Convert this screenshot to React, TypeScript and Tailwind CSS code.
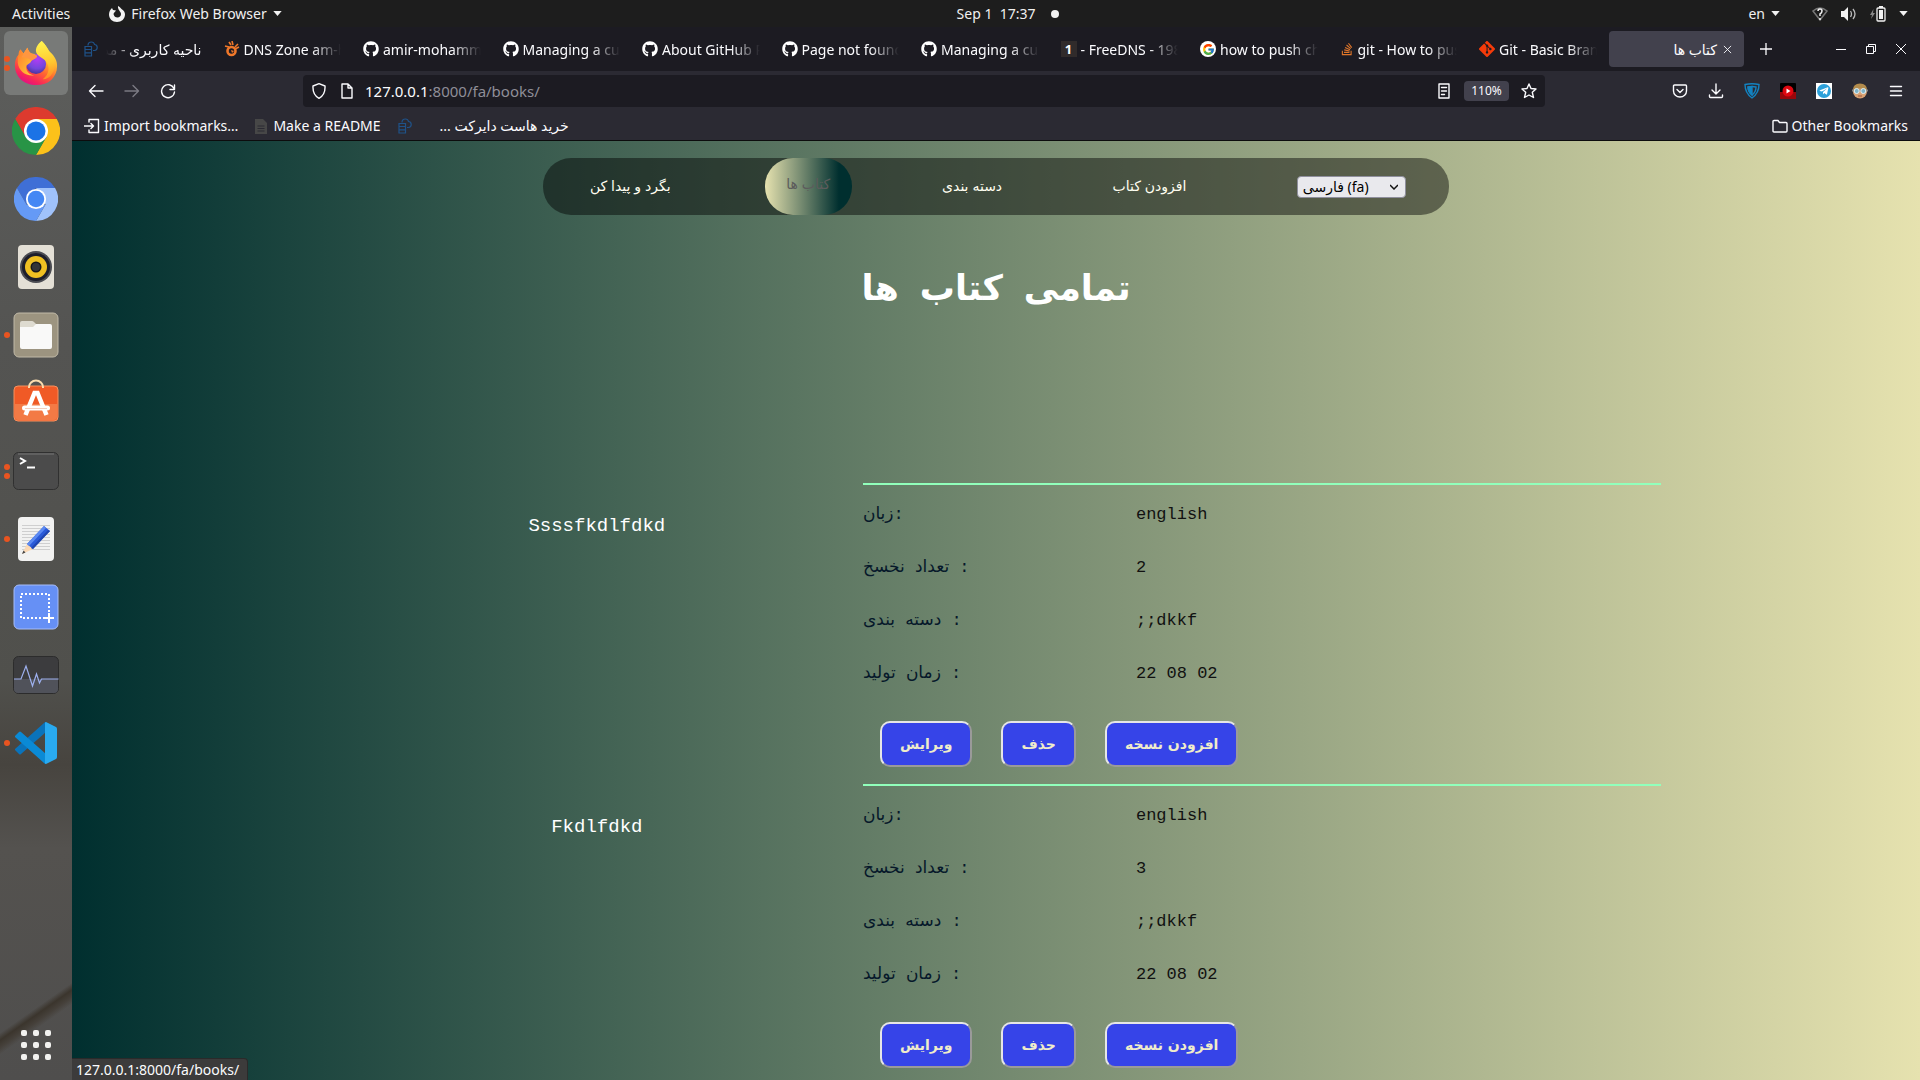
import type { ReactNode } from "react";
import { FaGithub, FaStackOverflow, FaTelegramPlane } from "react-icons/fa";
import { FcGoogle } from "react-icons/fc";
import { SiGit } from "react-icons/si";

const uiFont = "font-['Noto_Sans','DejaVu_Sans',sans-serif]";
const monoFont = "font-['Liberation_Mono','DejaVu_Sans',monospace]";

/* ---------- dock icons ---------- */

function FirefoxIcon() {
  return (
    <svg viewBox="0 0 48 48" className="size-[46px]">
      <defs>
        <linearGradient id="ffBody" x1="0.8" y1="0.05" x2="0.3" y2="1">
          <stop offset="0" stopColor="#fff14a" />
          <stop offset="0.35" stopColor="#ffb52e" />
          <stop offset="0.6" stopColor="#ff6a2f" />
          <stop offset="0.85" stopColor="#f8255a" />
          <stop offset="1" stopColor="#e00f86" />
        </linearGradient>
        <radialGradient id="ffGlobe" cx="0.55" cy="0.25" r="0.8">
          <stop offset="0" stopColor="#b23cf5" />
          <stop offset="0.6" stopColor="#7446dc" />
          <stop offset="1" stopColor="#45318f" />
        </radialGradient>
        <linearGradient id="ffTail" x1="0.4" y1="0" x2="0.5" y2="1">
          <stop offset="0" stopColor="#fff44f" />
          <stop offset="0.6" stopColor="#ffc62e" />
          <stop offset="1" stopColor="#ff8a26" />
        </linearGradient>
        <linearGradient id="ffHead" x1="0" y1="0" x2="1" y2="0.8">
          <stop offset="0" stopColor="#ff7a2e" />
          <stop offset="1" stopColor="#ffcf36" />
        </linearGradient>
      </defs>
      <path
        d="M30 1c5 5 6 8 8 11 6 5 8 10 8 15 0 12-9 20-21.500 20C11 47 2 38 2 26c0-4 1-8 4-11 0-2 .5-4 2-5 1 2 2 3 3 4l4-6c1 3 2 5 4 6l8 1c-2-5-1-10 3-14z"
        fill="url(#ffBody)"
      />
      <circle cx="24" cy="25" r="10.500" fill="url(#ffGlobe)" />
      <path
        d="M30 1c5 5 6 8 8 11 7 7 7 17 3 23-2 4-6 6-10 6 7-5 8-13 3-19-3-4-9-5-10-10-.5-4 2-8 6-11z"
        fill="url(#ffTail)"
      />
      <path
        d="M6 15c0-2 .5-4 2-5 1 2 2 3 3 4l4-6c1 3 2 5 4 6 2 1 6 1 6 3-1 3-5 3-6 5-1 3-4 3-5 5-1 5 3 9 8 10-9 1-16-5-17-13 0-4 0-6 1-9z"
        fill="url(#ffHead)"
      />
      <path d="M11 14l4-6c1 3 2 5 4 6 2 1 6 1 6 3-1 3-5 3-6 5-3-4-8-4-10-4z" fill="#ff9640" />
    </svg>
  );
}

function ChromeIcon() {
  return (
    <svg viewBox="0 0 48 48" className="size-12">
      <path d="M3.200 12A24 24 0 0 1 44.800 12H24L13.600 30z" fill="#dd3a2e" />
      <path d="M44.800 12A24 24 0 0 1 24 48L34.400 30 24 12z" fill="#fcc11a" />
      <path d="M24 48A24 24 0 0 1 3.200 12L13.600 30H34.400z" fill="#289446" />
      <circle cx="24" cy="24" r="12" fill="#fff" />
      <circle cx="24" cy="24" r="9.500" fill="#1b73e6" />
    </svg>
  );
}

function ChromiumIcon() {
  return (
    <svg viewBox="0 0 48 48" className="size-11">
      <path d="M3.200 12A24 24 0 0 1 44.800 12H24L13.600 30z" fill="#3f6fd6" />
      <path d="M44.800 12A24 24 0 0 1 24 48L34.400 30 24 12z" fill="#a0c2fa" />
      <path d="M24 48A24 24 0 0 1 3.200 12L13.600 30H34.400z" fill="#659af6" />
      <circle cx="24" cy="24" r="11" fill="#fff" />
      <circle cx="24" cy="24" r="9" fill="#4487f4" />
    </svg>
  );
}

function RhythmboxIcon() {
  return (
    <svg viewBox="0 0 48 48" className="size-12">
      <rect x="6" y="2" width="36" height="44" rx="4" fill="#e4e0d6" />
      <circle cx="24" cy="24" r="16" fill="#4b4c52" />
      <circle cx="24" cy="24" r="14" fill="#1d1e2b" />
      <circle cx="24" cy="24" r="11" fill="#efbf22" />
      <circle cx="24" cy="24" r="5.500" fill="#17171a" />
      <circle cx="24" cy="24" r="4" fill="#333438" />
    </svg>
  );
}

function FilesIcon() {
  return (
    <svg viewBox="0 0 48 48" className="size-12">
      <rect x="2" y="2" width="44" height="44" rx="5" fill="#9c9480" stroke="#c0b9a7" />
      <path d="M8 12q0-2 2-2h10q1 0 2 1l2 2h14v8H8z" fill="#dedbd0" />
      <path d="M8 16h13l3-3h14q2 0 2 2v21q0 2-2 2H10q-2 0-2-2z" fill="#f9f9f8" />
    </svg>
  );
}

function SoftwareIcon() {
  return (
    <svg viewBox="0 3 48 48" className="size-12">
      <rect x="2" y="10" width="44" height="35" rx="4" fill="#f05a26" stroke="#f7915f" />
      <path d="M3 28h42v13q0 3-3 3H6q-3 0-3-3z" fill="#f37a45" />
      <path d="M17 12v-1a7 6.500 0 0 1 14 0v1" fill="none" stroke="#fbdcae" strokeWidth="2" />
      <path d="M13.500 39L22.500 17h3L34.500 39" fill="none" stroke="#fff" strokeWidth="4.500" />
      <rect x="10" y="29.500" width="28" height="5" rx="2.500" fill="#fff" />
      <path d="M13 32.500h22" stroke="#f3cfc0" />
    </svg>
  );
}

function TerminalIcon() {
  return (
    <svg viewBox="0 0 48 48" className="size-12">
      <rect x="1.500" y="5.500" width="45" height="37" rx="5" fill="#4b4b4b" stroke="#303030" />
      <path d="M6 7h36" stroke="#777" />
      <path d="M8 11l5 3-5 3" fill="none" stroke="#fff" strokeWidth="2" />
      <path d="M15 20.500h8" stroke="#fff" strokeWidth="2" />
    </svg>
  );
}

function EditorIcon() {
  return (
    <svg viewBox="0 0 48 48" className="size-12">
      <rect x="6" y="2" width="36" height="44" rx="4" fill="#f2f2f1" />
      <path
        d="M10 10.500h28M10 13.500h28M10 16.500h28M10 19.500h28M10 22.500h28M10 25.500h28M10 28.500h28M10 31.500h28M10 34.500h28"
        stroke="#cfcfcf"
      />
      <path d="M10 39l5-10 6 5z" fill="#fbd9b5" />
      <path d="M10 39l1.500-3.500 2 2z" fill="#444" />
      <path d="M15 29l17-18 6 5-17 18z" fill="#2a5ad9" />
      <path d="M15 29l17-18 2 2-17 18z" fill="#5c8af2" />
      <path d="M19 33l17-18 2 1-17 18z" fill="#2046b0" />
    </svg>
  );
}

function ScreenshotIcon() {
  return (
    <svg viewBox="0 0 48 48" className="size-12">
      <rect x="2" y="2" width="44" height="44" rx="5" fill="#6690f5" stroke="#a7bdf8" />
      <rect x="9" y="11" width="28" height="24" fill="none" stroke="#fff" strokeWidth="2" strokeDasharray="2 2" />
      <path d="M37 30v10M32 35h10" stroke="#fff" strokeWidth="2" />
    </svg>
  );
}

function MonitorIcon() {
  return (
    <svg viewBox="0 0 48 48" className="size-12">
      <rect x="1.500" y="5.500" width="45" height="37" rx="5" fill="#3c3c3e" stroke="#2c2c2c" />
      <path d="M2 28h44v10q0 4-4 4H6q-4 0-4-4z" fill="#50525a" />
      <path d="M2 28h7l5-13 6.500 20 4-12 3 9 2-4h17" fill="none" stroke="#9db0ee" strokeWidth="1.200" />
    </svg>
  );
}

function CodeIcon() {
  return (
    <svg viewBox="0 0 48 48" className="size-12">
      <path d="M3 31l4 4q1 1 2 0L34 13V3q-1 0-2 1L3 30z" fill="#0a73bb" />
      <path d="M3 17l4-4q1-1 2 0L34 35v10q-1 0-2-1L3 18z" fill="#0a8ad6" />
      <path d="M34 3l10 5q1 .5 1 2v28q0 1.500-1 2l-10 5q-1 0-1-1V4q0-1 1-1z" fill="#29aaf0" />
    </svg>
  );
}

const dock: { name: string; icon: ReactNode; dots: number; active?: boolean }[] = [
  { name: "Firefox", icon: <FirefoxIcon />, dots: 2, active: true },
  { name: "Chrome", icon: <ChromeIcon />, dots: 0 },
  { name: "Chromium", icon: <ChromiumIcon />, dots: 0 },
  { name: "Rhythmbox", icon: <RhythmboxIcon />, dots: 0 },
  { name: "Files", icon: <FilesIcon />, dots: 1 },
  { name: "Software", icon: <SoftwareIcon />, dots: 0 },
  { name: "Terminal", icon: <TerminalIcon />, dots: 2 },
  { name: "Text Editor", icon: <EditorIcon />, dots: 1 },
  { name: "Screenshot", icon: <ScreenshotIcon />, dots: 0 },
  { name: "System Monitor", icon: <MonitorIcon />, dots: 0 },
  { name: "Visual Studio Code", icon: <CodeIcon />, dots: 1 },
];

function Dock() {
  return (
    <aside className="flex w-[72px] shrink-0 flex-col bg-[linear-gradient(145deg,transparent_0_46%,#3b352d_50%,#45403a_54%,transparent_58%),linear-gradient(180deg,#5d5e5c,#545452_30%,#50504c_62%,#47443f_70%,#54524f_78%,#4f4e4d)] bg-[length:100%_130px,100%_100%] bg-[position:bottom,top] bg-no-repeat pt-1 pb-3">
      <div className="flex flex-col gap-1">
        {dock.map((d) => (
          <div key={d.name} className="flex h-16 items-center">
            <span className="relative z-10 flex w-1 shrink-0 flex-col items-end gap-[3px]">
              {Array.from({ length: d.dots }, (_, i) => (
                <span key={i} className="-mr-1.5 size-1.5 rounded-full bg-[#e95420]" />
              ))}
            </span>
            <button
              aria-label={d.name}
              className={
                d.active
                  ? "flex size-16 items-center justify-center rounded-md bg-[#787a78]"
                  : "flex size-16 items-center justify-center rounded-md"
              }
            >
              {d.icon}
            </button>
          </div>
        ))}
      </div>
      <button aria-label="Show Applications" className="mt-auto grid grid-cols-3 gap-1.5 self-center p-2">
        {Array.from({ length: 9 }, (_, i) => (
          <span key={i} className="size-1.5 rounded-[2px] bg-[#f2f2f0]" />
        ))}
      </button>
    </aside>
  );
}

/* ---------- desktop top bar ---------- */

function Caret() {
  return (
    <svg viewBox="0 0 10 6" className="h-[5px] w-[9px] shrink-0">
      <path d="M0 0h10L5 6z" fill="#f2f2f2" />
    </svg>
  );
}

function TopBar() {
  return (
    <header className="grid h-[27px] shrink-0 grid-cols-[1fr_auto_1fr] items-center bg-[#1d1d1d] px-3 text-[14px] text-[#f0f0f0]">
      <div className="flex items-center">
        <button>Activities</button>
        <button className="ml-[39px] flex items-center gap-1.5">
          <svg viewBox="0 0 16 16" className="size-4">
            <path
              fillRule="evenodd"
              d="M9 0c2 1 2.500 2 3.500 3C15 4.500 16 6.500 16 8.500 16 13 12.500 16 8 16S0 13 0 8.500C0 6 1 4 3 2l1 2 3 .5C6 6 5 6.500 4.500 8 5 10.500 6.500 11.500 8.500 11.500c2 0 3.500-1.500 3.500-3.500C12 5.500 8.500 4 9 0z"
              fill="#f2f2f2"
            />
          </svg>
          <span>Firefox Web Browser</span>
          <Caret />
        </button>
      </div>
      <button className="flex items-center gap-4 pl-24">
        <span className="whitespace-pre">Sep 1  17:37</span>
        <span className="size-2 rounded-full bg-[#f2f2f2]" />
      </button>
      <div className="flex items-center justify-end">
        <button className="flex items-center gap-1.5">
          en <Caret />
        </button>
        <button aria-label="System menu" className="ml-8 flex items-center gap-[13px]">
          <svg viewBox="0 0 16 16" className="size-4" fill="none">
            <path d="M1 5Q8-1 15 5L8 14z" stroke="#777" strokeWidth="1.500" />
            <path d="M6 5q0-2 2-2t2 2-2 3v2M8 12v2" stroke="#f2f2f2" strokeWidth="1.500" />
          </svg>
          <svg viewBox="0 0 16 16" className="size-4">
            <path d="M0 5h3l4-4v14l-4-4H0z" fill="#f2f2f2" />
            <path d="M9.500 5q2 3 0 6M12 3q4 5 0 10" stroke="#bbb" strokeWidth="1.300" fill="none" />
          </svg>
          <svg viewBox="0 0 16 16" className="size-4">
            <path d="M3.500 3L0 9h2l-1 4 4-6H3z" fill="#888" />
            <rect x="7" y="2" width="8" height="13" rx="1" fill="none" stroke="#f2f2f2" strokeWidth="1.300" />
            <path d="M9 4h4v9H9zM9 0h4v2H9z" fill="#f2f2f2" />
          </svg>
          <Caret />
        </button>
      </div>
    </header>
  );
}

/* ---------- browser chrome ---------- */

function HostIcon() {
  return (
    <svg viewBox="0 0 14 16" className="h-4 w-[14px] shrink-0" fill="none" stroke="#1f5288" strokeWidth="1.200">
      <path d="M4 4.500q0-3.500 3.500-3.500 2.500 0 3 2.500 2.700.2 2.700 3T10.500 9.500H9" />
      <path d="M1 5.500h6.500v9.500H1zM1 8.500h6.500M1 11.800h6.500" />
    </svg>
  );
}

const gh = <FaGithub className="size-4 shrink-0 text-white" />;

const tabs: { icon: ReactNode; title: string; rtl?: boolean }[] = [
  { icon: <HostIcon />, title: "ناحیه کاربری - مد", rtl: true },
  {
    icon: (
      <svg viewBox="0 0 16 16" className="size-4 shrink-0" fill="none" stroke="#f0782a">
        <path d="M5 1l2 3M8 0l1 4M1 5l4 1M14 3l-3 3M15 6l-4 2" strokeWidth="1.600" />
        <circle cx="7.500" cy="10" r="4" strokeWidth="2.600" />
        <path d="M7 9l3 1-2 2z" fill="#f0782a" stroke="none" />
      </svg>
    ),
    title: "DNS Zone am-h",
  },
  { icon: gh, title: "amir-mohamm" },
  { icon: gh, title: "Managing a cus" },
  { icon: gh, title: "About GitHub P" },
  { icon: gh, title: "Page not found" },
  { icon: gh, title: "Managing a cus" },
  {
    icon: (
      <span className="flex size-4 shrink-0 items-center justify-center bg-[#302b2b] text-[13px] leading-4 font-bold">
        1
      </span>
    ),
    title: "- FreeDNS - 198",
  },
  {
    icon: (
      <span className="flex size-4 shrink-0 items-center justify-center rounded-full bg-white">
        <FcGoogle className="size-[13px]" />
      </span>
    ),
    title: "how to push ch",
  },
  { icon: <FaStackOverflow className="size-[14px] shrink-0 text-[#e0762a]" />, title: "git - How to pus" },
  { icon: <SiGit className="size-4 shrink-0 text-[#f53b0a]" />, title: "Git - Basic Bran" },
];

function TabBar() {
  return (
    <div className="flex h-11 shrink-0 items-center bg-[#1c1b22] text-[14px] text-[#fbfbfe]">
      <div role="tablist" className="grid min-w-0 flex-1 grid-cols-12 items-center">
        {tabs.map((t, i) => (
          <button key={i} role="tab" className="flex h-9 min-w-0 items-center gap-1 pr-2.5 pl-3">
            {t.icon}
            <span
              dir={t.rtl ? "rtl" : "ltr"}
              className={
                t.rtl
                  ? "ml-1 min-w-0 flex-1 overflow-hidden text-right whitespace-nowrap [mask-image:linear-gradient(to_left,black_70%,transparent)]"
                  : "min-w-0 flex-1 overflow-hidden text-left whitespace-nowrap [mask-image:linear-gradient(to_right,black_70%,transparent)]"
              }
            >
              {t.title}
            </span>
          </button>
        ))}
        <div className="flex min-w-0 px-0.5">
          <div className="flex h-9 flex-1 items-center justify-end gap-1.5 rounded bg-[#42414d] px-3">
            <span role="tab" dir="rtl">
              کتاب ها
            </span>
            <button aria-label="Close tab">
              <svg viewBox="0 0 10 10" className="size-[9px]" stroke="#fbfbfe">
                <path d="M1 1l8 8M9 1L1 9" />
              </svg>
            </button>
          </div>
        </div>
      </div>
      <button aria-label="New tab" className="ml-3 flex size-4 items-center justify-center">
        <svg viewBox="0 0 12 12" className="size-3" stroke="#fbfbfe" strokeWidth="1.300">
          <path d="M6 0v12M0 6h12" />
        </svg>
      </button>
      <div className="mr-3 ml-[60px] flex items-center gap-4">
        <button aria-label="Minimize" className="flex size-[14px] items-center justify-center">
          <span className="h-px w-2.5 bg-[#fbfbfe]" />
        </button>
        <button aria-label="Restore" className="size-[14px]">
          <svg viewBox="0 0 14 14" className="size-[14px]" fill="none" stroke="#fbfbfe">
            <path d="M2.500 4.500h7v7h-7zM4.500 4.500v-2h7v7h-2" />
          </svg>
        </button>
        <button aria-label="Close" className="size-[14px]">
          <svg viewBox="0 0 14 14" className="size-[14px]" stroke="#fbfbfe">
            <path d="M2 2l10 10M12 2L2 12" />
          </svg>
        </button>
      </div>
    </div>
  );
}

function ToolButton({ label, children }: { label: string; children: ReactNode }) {
  return (
    <button aria-label={label} className="flex h-9 w-9 shrink-0 items-center justify-center">
      {children}
    </button>
  );
}

function LineIcon({ d, dim }: { d: string; dim?: boolean }) {
  return (
    <svg
      viewBox="0 0 16 16"
      className={dim ? "size-4 shrink-0 text-[#7b7a83]" : "size-4 shrink-0 text-[#fbfbfe]"}
      fill="none"
      stroke="currentColor"
      strokeWidth="1.400"
      strokeLinecap="round"
      strokeLinejoin="round"
    >
      <path d={d} />
    </svg>
  );
}

function NavBar() {
  return (
    <div className="flex h-10 shrink-0 items-center bg-[#2b2a33] px-1.5 text-[15px] text-[#fbfbfe]">
      <ToolButton label="Back">
        <LineIcon d="M15 8H1.500M7 2.500L1.500 8 7 13.500" />
      </ToolButton>
      <ToolButton label="Forward">
        <LineIcon dim d="M1 8h13.500M9 2.500L14.500 8 9 13.500" />
      </ToolButton>
      <ToolButton label="Reload">
        <LineIcon d="M14.500 2v4.500H10M14 5.500A6.500 6.500 0 1 0 14.500 9" />
      </ToolButton>
      <div className="mx-[117px] flex h-8 min-w-0 flex-1 items-center rounded bg-[#1c1b22] px-2">
        <LineIcon d="M8 .7l6 2.300c.3 5-1.500 10-6 12.300C3.500 13 1.700 8 2 3z" />
        <span className="ml-3 flex">
          <LineIcon d="M3 1h6l4 4v10H3zM9 1v4h4" />
        </span>
        <label htmlFor="address" className="ml-2.5 text-[#fbfbfe]">
          127.0.0.1
        </label>
        <input
          id="address"
          defaultValue=":8000/fa/books/"
          className="min-w-0 flex-1 bg-transparent text-[#8f8e98] outline-none"
        />
        <LineIcon d="M3 1h10v14H3zM5.500 4.500h5M5.500 8h5M5.500 11.500h3" />
        <button className="mx-3 h-5 w-[45px] rounded bg-[#42414d] text-[12px]">110%</button>
        <LineIcon d="M8 1l2 4.500 5 .5-3.700 3.300L12.500 14.500 8 12l-4.500 2.500L4.700 9.300 1 6l5-.5z" />
      </div>
      <ToolButton label="Pocket">
        <LineIcon d="M1.500 3q0-1 1-1h11q1 0 1 1v5a6.500 6 0 0 1-13 0zM5 6.500l3 3 3-3" />
      </ToolButton>
      <ToolButton label="Downloads">
        <LineIcon d="M8 1v10M4 7l4 4 4-4M1.500 12v1.500q0 1 1 1h11q1 0 1-1V12" />
      </ToolButton>
      <ToolButton label="VPN">
        <svg viewBox="0 0 16 16" className="size-4" fill="none" stroke="#1382c0" strokeWidth="1.400">
          <path d="M1 1.500q7-1.500 14 0Q15 10 8 15 1 10 1 1.500z" />
          <path d="M4 4q4-1 8 0 0 5-4 8-4-3-4-8z" />
          <path d="M8 3.500V12Q4.500 9 4 4z" fill="#1382c0" />
        </svg>
      </ToolButton>
      <ToolButton label="Video">
        <svg viewBox="0 0 16 16" className="size-4">
          <rect width="16" height="16" rx="1" fill="#000" />
          <path d="M0 9h16v7H0z" fill="#98070b" />
          <circle cx="8" cy="8" r="5.500" fill="#de0710" />
          <path d="M6.500 5.500L10.500 8l-4 2.500z" fill="#fff" />
        </svg>
      </ToolButton>
      <ToolButton label="Telegram">
        <span className="flex size-4 items-center justify-center bg-white">
          <span className="flex size-[14px] items-center justify-center rounded-full bg-[#2ba0da]">
            <FaTelegramPlane className="size-2.5 text-white" />
          </span>
        </span>
      </ToolButton>
      <ToolButton label="Profile">
        <svg viewBox="0 0 16 16" className="size-4">
          <circle cx="8" cy="8.500" r="7" fill="#d9a273" />
          <path d="M1 7Q1 .5 8 .5T15 7Q8 4 1 7z" fill="#b28b4c" />
          <path d="M0 6.500h16v2H0z" fill="#8a8580" />
          <circle cx="4.700" cy="8" r="2.500" fill="#7fb4c8" stroke="#e6f2f5" />
          <circle cx="11.300" cy="8" r="2.500" fill="#7fb4c8" stroke="#e6f2f5" />
          <path d="M6 13h4" stroke="#a0543d" />
        </svg>
      </ToolButton>
      <ToolButton label="Menu">
        <LineIcon d="M2.500 3.500h11M2.500 8h11M2.500 12.500h11" />
      </ToolButton>
    </div>
  );
}

function BookmarkBar() {
  return (
    <div className="flex h-[30px] shrink-0 items-center border-b border-[#0c0c0d] bg-[#2b2a33] px-3 text-[14px] text-[#fbfbfe]">
      <a href="#import" className="flex items-center gap-1">
        <LineIcon d="M5 4V1.500h9.500v13H5V12M0 8h9.500M7 5.500L9.500 8 7 10.500" />
        Import bookmarks…
      </a>
      <a href="#readme" className="ml-[17px] flex items-center gap-1.5">
        <svg viewBox="0 0 12 16" className="h-4 w-3">
          <path d="M0 1h8l4 4v11H0z" fill="#474747" />
          <path d="M2.500 8h7M2.500 10.500h7M2.500 13h7" stroke="#2b2a33" />
        </svg>
        Make a README
      </a>
      <a href="#host" className="ml-[17px] flex items-center">
        <HostIcon />
        <span dir="rtl" className="ml-7">
          خرید هاست دایرکت ...
        </span>
      </a>
      <a href="#other" className="ml-auto flex items-center gap-1">
        <LineIcon d="M1 3.500q0-1 1-1h4l1.500 2H14q1 0 1 1V13q0 1-1 1H2q-1 0-1-1z" />
        Other Bookmarks
      </a>
    </div>
  );
}

/* ---------- page ---------- */

function SiteNav() {
  return (
    <nav className="mx-auto mt-[17px] flex h-[57px] w-[49%] items-center justify-between rounded-[28px] bg-[#000]/45 px-[23px] font-['Liberation_Sans','DejaVu_Sans',sans-serif] text-[14px] text-[#fffef0]">
      <a href="#search" className="w-32 text-center">
        بگرد و پیدا کن
      </a>
      <a
        href="#books"
        className="flex h-full w-[87px] items-center justify-center rounded-[28px] bg-[linear-gradient(90deg,#e6e2af,#002f2f_85%)] pb-1 text-[#5c5c5c]"
      >
        کتاب ها
      </a>
      <a href="#categories" className="px-5">
        دسته بندی
      </a>
      <a href="#add" className="px-5">
        افزودن کتاب
      </a>
      <div className="grid items-center px-5">
        <select
          aria-label="Language"
          className={`col-start-1 row-start-1 h-[22px] w-[109px] appearance-none rounded border border-[#8f8f9d] bg-[#e9e9ed] pl-[5px] text-[14px] leading-5 text-black ${uiFont}`}
        >
          <option>فارسی (fa)</option>
        </select>
        <svg
          viewBox="0 0 8 6"
          className="pointer-events-none col-start-1 row-start-1 mr-2 h-1.5 w-2 justify-self-end"
          fill="none"
          stroke="#111"
          strokeWidth="1.500"
        >
          <path d="M0 1l4 4 4-4" />
        </svg>
      </div>
    </nav>
  );
}

const books = [
  { name: "Ssssfkdlfdkd", copies: "2" },
  { name: "Fkdlfdkd", copies: "3" },
];

const actions = ["ویرایش", "حذف", "افزودن نسخه"];

function Book({ name, copies }: { name: string; copies: string }) {
  const rows = [
    ["زبان:", "english"],
    ["تعداد نخسخ :", copies],
    ["دسته بندی :", ";;dkkf"],
    ["زمان تولید :", "22 08 02"],
  ];
  return (
    <article className="grid grid-cols-[2fr_3fr]">
      <h2 className="pt-[29px] text-center text-[19px] leading-7 text-white">{name}</h2>
      <div className="border-t-2 border-[#91ffbb] pt-[3px] pb-[17px]">
        <dl>
          {rows.map(([k, v]) => (
            <div key={k} className="grid h-[53px] grid-cols-[273px_1fr] items-center text-[17px]">
              <dt className="text-[#06182a]">{k}</dt>
              <dd className="text-[#111]">{v}</dd>
            </div>
          ))}
        </dl>
        <div className="mt-[21px] flex gap-[29px] pl-[17px]">
          {actions.map((a) => (
            <button
              key={a}
              className="h-[46px] rounded-[10px] border-2 border-t-[#e6e6e6] border-r-[#9a9a9a] border-b-[#9a9a9a] border-l-[#e6e6e6] bg-[#3644e8] px-[18px] font-['DejaVu_Sans',sans-serif] text-[14px] font-bold text-[#efecca]"
            >
              {a}
            </button>
          ))}
        </div>
      </div>
    </article>
  );
}

export default function App() {
  return (
    <div className={`flex h-screen flex-col overflow-hidden ${uiFont}`}>
      <TopBar />
      <div className="flex min-h-0 flex-1">
        <Dock />
        <div className="relative flex min-w-0 flex-1 flex-col">
          <TabBar />
          <NavBar />
          <BookmarkBar />
          <main className={`min-h-0 flex-1 overflow-hidden bg-[linear-gradient(90deg,#002f2f,#e6e2af)] ${monoFont}`}>
            <SiteNav />
            <h1 className="mt-[52px] text-center text-[35px] leading-[48px] font-bold text-white">تمامی کتاب ها</h1>
            <section className="mx-auto mt-[168px] w-[72%]">
              {books.map((b) => (
                <Book key={b.name} {...b} />
              ))}
            </section>
          </main>
          <div className="absolute bottom-0 left-0 rounded-tr border-t border-r border-[#2a2a2a] bg-[#3c3b3b] pr-2 pl-1 text-[14px] leading-[21px] text-[#fbfbfe]">
            127.0.0.1:8000/fa/books/
          </div>
        </div>
      </div>
    </div>
  );
}
